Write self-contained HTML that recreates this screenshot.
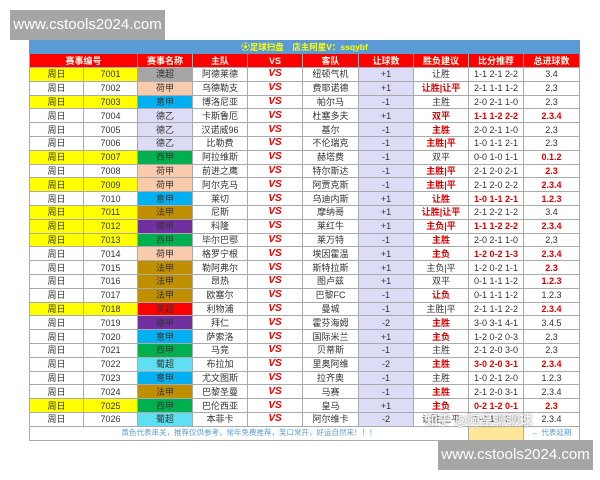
<!DOCTYPE html><html><head><meta charset="utf-8"><style>
body{margin:0;width:600px;height:480px;background:#fff;position:relative;overflow:hidden;font-family:"Liberation Sans","Noto Sans CJK SC",sans-serif}
.wm{position:absolute;background:#a6a6a6;color:#fff;font-size:15px;text-align:center;line-height:30px;width:155px;height:30px}
table{position:absolute;left:29px;top:40px;border-collapse:collapse;table-layout:fixed;width:551px}
td{border:1px solid #aaa;font-size:9px;text-align:center;padding:0;height:12.8px;line-height:12px;color:#333;white-space:nowrap;overflow:hidden}
tr.t td{background:#5b9bd5;color:#ff0;font-weight:bold;height:12px;border-color:#5b9bd5;font-size:8.5px}
tr.h td{background:#f00;color:#ffe;font-weight:bold;height:13px;font-size:9px}
.y{background:#ff0}.hc{background:#dcdcf6}
.vs{color:#e00;font-weight:bold;font-style:italic;font-size:10px}
.r{color:#d00;font-weight:bold}
.a{background:#a6a6a6}.n{background:#f8cbad}.i{background:#00b0f0}.d{background:#dcdcf6}.x{background:#00b050}.f{background:#bf8f00}.g{background:#7030a0}.e{background:#f00}.p{background:#5fe0f2}
tr.ft td{height:13px;color:#5b9bd5;font-size:7.5px}
.zh{position:absolute;left:425px;top:410px;color:rgba(255,255,255,.85);font-size:13px;font-weight:bold;text-shadow:0 0 2px #888}
</style></head><body>
<div class="wm" style="left:10px;top:10px">www.cstools2024.com</div>
<table>
<colgroup><col style="width:54px"><col style="width:54px"><col style="width:55px"><col style="width:55px"><col style="width:55px"><col style="width:56px"><col style="width:55px"><col style="width:55px"><col style="width:55px"><col style="width:56px"></colgroup>
<tr class="t"><td colspan="10">⚽足球扫盘　店主阿星V：ssqybf</td></tr>
<tr class="h"><td colspan="2">赛事编号</td><td>赛事名称</td><td>主队</td><td>VS</td><td>客队</td><td>让球数</td><td>胜负建议</td><td>比分推荐</td><td>总进球数</td></tr>
<tr><td class="y">周日</td><td class="y">7001</td><td class="a">澳超</td><td>阿德莱德</td><td class="vs">VS</td><td>纽顿气机</td><td class="hc">+1</td><td>让胜</td><td>1-1 2-1 2-2</td><td>3.4</td></tr>
<tr><td>周日</td><td>7002</td><td class="n">荷甲</td><td>乌德勒支</td><td class="vs">VS</td><td>费耶诺德</td><td class="hc">+1</td><td class="r">让胜|让平</td><td>2-1 1-1 1-2</td><td>2.3</td></tr>
<tr><td class="y">周日</td><td class="y">7003</td><td class="i">意甲</td><td>博洛尼亚</td><td class="vs">VS</td><td>帕尔马</td><td class="hc">-1</td><td>主胜</td><td>2-0 2-1 1-0</td><td>2.3</td></tr>
<tr><td>周日</td><td>7004</td><td class="d">德乙</td><td>卡斯鲁厄</td><td class="vs">VS</td><td>杜塞多夫</td><td class="hc">+1</td><td class="r">双平</td><td class="r">1-1 1-2 2-2</td><td class="r">2.3.4</td></tr>
<tr><td>周日</td><td>7005</td><td class="d">德乙</td><td>汉诺威96</td><td class="vs">VS</td><td>基尔</td><td class="hc">-1</td><td class="r">主胜</td><td>2-0 2-1 1-0</td><td>2.3</td></tr>
<tr><td>周日</td><td>7006</td><td class="d">德乙</td><td>比勒费</td><td class="vs">VS</td><td>不伦瑞克</td><td class="hc">-1</td><td class="r">主胜|平</td><td>1-0 1-1 2-1</td><td>2.3</td></tr>
<tr><td class="y">周日</td><td class="y">7007</td><td class="x">西甲</td><td>阿拉维斯</td><td class="vs">VS</td><td>赫塔费</td><td class="hc">-1</td><td>双平</td><td>0-0 1-0 1-1</td><td class="r">0.1.2</td></tr>
<tr><td>周日</td><td>7008</td><td class="n">荷甲</td><td>前进之鹰</td><td class="vs">VS</td><td>特尔斯达</td><td class="hc">-1</td><td class="r">主胜|平</td><td>2-1 2-0 2-1</td><td class="r">2.3</td></tr>
<tr><td class="y">周日</td><td class="y">7009</td><td class="n">荷甲</td><td>阿尔克马</td><td class="vs">VS</td><td>阿贾克斯</td><td class="hc">-1</td><td class="r">主胜|平</td><td>2-1 2-0 2-2</td><td class="r">2.3.4</td></tr>
<tr><td>周日</td><td>7010</td><td class="i">意甲</td><td>莱切</td><td class="vs">VS</td><td>乌迪内斯</td><td class="hc">+1</td><td class="r">让胜</td><td class="r">1-0 1-1 2-1</td><td class="r">1.2.3</td></tr>
<tr><td class="y">周日</td><td class="y">7011</td><td class="f">法甲</td><td>尼斯</td><td class="vs">VS</td><td>摩纳哥</td><td class="hc">+1</td><td class="r">让胜|让平</td><td>2-1 2-2 1-2</td><td>3.4</td></tr>
<tr><td class="y">周日</td><td class="y">7012</td><td class="g">德甲</td><td>科隆</td><td class="vs">VS</td><td>莱红牛</td><td class="hc">+1</td><td class="r">主负|平</td><td class="r">1-1 1-2 2-2</td><td class="r">2.3.4</td></tr>
<tr><td class="y">周日</td><td class="y">7013</td><td class="x">西甲</td><td>毕尔巴鄂</td><td class="vs">VS</td><td>莱万特</td><td class="hc">-1</td><td class="r">主胜</td><td>2-0 2-1 1-0</td><td>2.3</td></tr>
<tr><td>周日</td><td>7014</td><td class="n">荷甲</td><td>格罗宁根</td><td class="vs">VS</td><td>埃因霍温</td><td class="hc">+1</td><td class="r">主负</td><td class="r">1-2 0-2 1-3</td><td class="r">2.3.4</td></tr>
<tr><td>周日</td><td>7015</td><td class="f">法甲</td><td>勒阿弗尔</td><td class="vs">VS</td><td>斯特拉斯</td><td class="hc">+1</td><td>主负|平</td><td>1-2 0-2 1-1</td><td class="r">2.3</td></tr>
<tr><td>周日</td><td>7016</td><td class="f">法甲</td><td>昂热</td><td class="vs">VS</td><td>图卢兹</td><td class="hc">+1</td><td>双平</td><td>0-1 1-1 1-2</td><td class="r">1.2.3</td></tr>
<tr><td>周日</td><td>7017</td><td class="f">法甲</td><td>欧塞尔</td><td class="vs">VS</td><td>巴黎FC</td><td class="hc">-1</td><td class="r">让负</td><td>0-1 1-1 1-2</td><td>1.2.3</td></tr>
<tr><td class="y">周日</td><td class="y">7018</td><td class="e">英超</td><td>利物浦</td><td class="vs">VS</td><td>曼城</td><td class="hc">-1</td><td>主胜|平</td><td>2-1 1-1 2-2</td><td class="r">2.3.4</td></tr>
<tr><td>周日</td><td>7019</td><td class="g">德甲</td><td>拜仁</td><td class="vs">VS</td><td>霍芬海姆</td><td class="hc">-2</td><td class="r">主胜</td><td>3-0 3-1 4-1</td><td>3.4.5</td></tr>
<tr><td>周日</td><td>7020</td><td class="i">意甲</td><td>萨索洛</td><td class="vs">VS</td><td>国际米兰</td><td class="hc">+1</td><td class="r">主负</td><td>1-2 0-2 0-3</td><td>2.3</td></tr>
<tr><td>周日</td><td>7021</td><td class="x">西甲</td><td>马竞</td><td class="vs">VS</td><td>贝蒂斯</td><td class="hc">-1</td><td>主胜</td><td>2-1 2-0 3-0</td><td>2.3</td></tr>
<tr><td>周日</td><td>7022</td><td class="p">葡超</td><td>布拉加</td><td class="vs">VS</td><td>里奥阿维</td><td class="hc">-2</td><td class="r">主胜</td><td class="r">3-0 2-0 3-1</td><td class="r">2.3.4</td></tr>
<tr><td>周日</td><td>7023</td><td class="i">意甲</td><td>尤文图斯</td><td class="vs">VS</td><td>拉齐奥</td><td class="hc">-1</td><td>主胜</td><td>1-0 2-1 2-0</td><td>1.2.3</td></tr>
<tr><td>周日</td><td>7024</td><td class="f">法甲</td><td>巴黎圣曼</td><td class="vs">VS</td><td>马赛</td><td class="hc">-1</td><td class="r">主胜</td><td>2-1 2-0 3-1</td><td>2.3.4</td></tr>
<tr><td class="y">周日</td><td class="y">7025</td><td class="x">西甲</td><td>巴伦西亚</td><td class="vs">VS</td><td>皇马</td><td class="hc">+1</td><td class="r">主负</td><td class="r">0-2 1-2 0-1</td><td class="r">2.3</td></tr>
<tr><td>周日</td><td>7026</td><td class="p">葡超</td><td>本菲卡</td><td class="vs">VS</td><td>阿尔维卡</td><td class="hc">-2</td><td>让胜|让平</td><td>2-0 1-0 3-0</td><td>2.3.4</td></tr>
<tr class="ft"><td colspan="8">黄色代表串关，推荐仅供参考，常年免费推荐，笑口常开，好运自然来！！！</td><td style="background:#ffe699"></td><td>← 代表延期</td></tr>
</table>
<div class="zh">知乎 @阿呈聊聊球</div>
<div class="wm" style="left:438px;top:440px">www.cstools2024.com</div>
</body></html>
